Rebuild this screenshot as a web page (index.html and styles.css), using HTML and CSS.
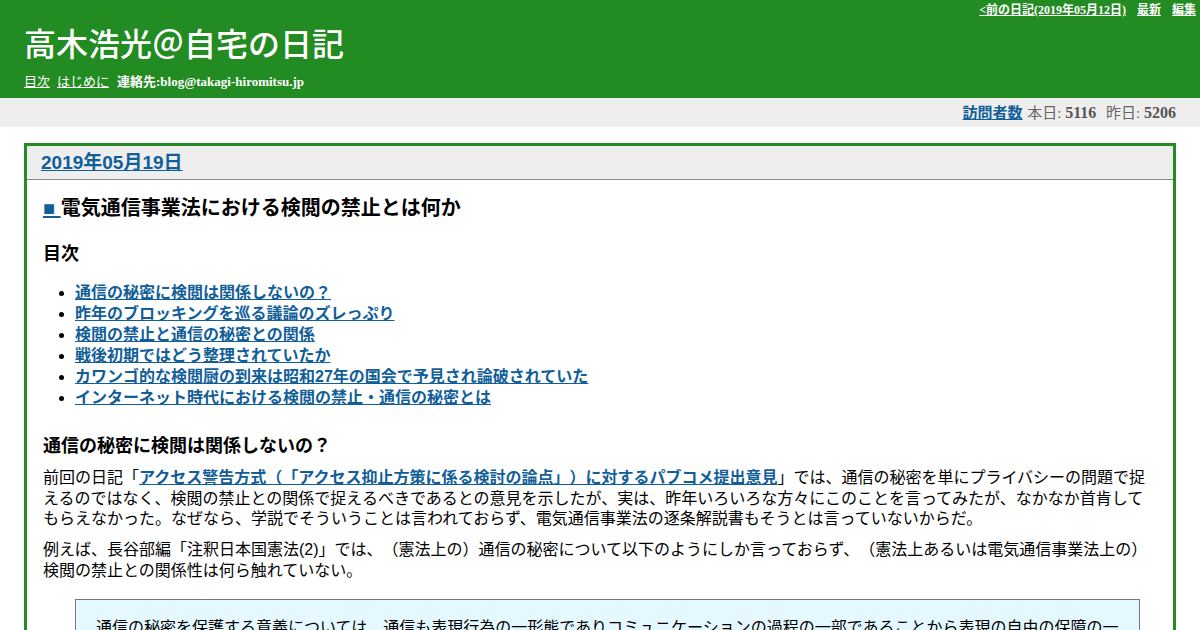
FILE: index.html
```html
<!DOCTYPE html>
<html lang="ja">
<head>
<meta charset="utf-8">
<title>高木浩光＠自宅の日記</title>
<link rel="stylesheet" href="styles.css">
</head>
<body>
<header class="site-header">
  <nav class="topnav">
    <a href="#">&lt;前の日記(2019年05月12日)</a>
    <a href="#">最新</a>
    <a href="#">編集</a>
  </nav>
  <h1 class="site-title">高木浩光＠自宅の日記</h1>
  <div class="subnav">
    <a href="#">目次</a>
    <a href="#">はじめに</a>
    <span class="contact">連絡先:blog@takagi-hiromitsu.jp</span>
  </div>
</header>
<div class="counter">
  <a href="#" class="counter-link">訪問者数</a>
  <span class="label">本日:</span> <b>5116</b>
  <span class="label label-gap">昨日:</span> <b>5206</b>
</div>
<main class="day">
  <div class="day-head"><a href="#">2019年05月19日</a></div>
  <div class="day-body">
    <h2 class="entry-title"><a href="#">■ </a>電気通信事業法における検閲の禁止とは何か</h2>
    <h3 class="sub">目次</h3>
    <ul class="toc">
      <li><a href="#">通信の秘密に検閲は関係しないの？</a></li>
      <li><a href="#">昨年のブロッキングを巡る議論のズレっぷり</a></li>
      <li><a href="#">検閲の禁止と通信の秘密との関係</a></li>
      <li><a href="#">戦後初期ではどう整理されていたか</a></li>
      <li><a href="#">カワンゴ的な検閲厨の到来は昭和27年の国会で予見され論破されていた</a></li>
      <li><a href="#">インターネット時代における検閲の禁止・通信の秘密とは</a></li>
    </ul>
    <h3 class="sub sec">通信の秘密に検閲は関係しないの？</h3>
    <p>前回の日記「<a href="#">アクセス警告方式（「アクセス抑止方策に係る検討の論点」）に対するパブコメ提出意見</a>」では、通信の秘密を単にプライバシーの問題で捉えるのではなく、検閲の禁止との関係で捉えるべきであるとの意見を示したが、実は、昨年いろいろな方々にこのことを言ってみたが、なかなか首肯してもらえなかった。なぜなら、学説でそういうことは言われておらず、電気通信事業法の逐条解説書もそうとは言っていないからだ。</p>
    <p>例えば、長谷部編「注釈日本国憲法(2)」では、（憲法上の）通信の秘密について以下のようにしか言っておらず、（憲法上あるいは電気通信事業法上の）検閲の禁止との関係性は何ら触れていない。</p>
    <blockquote class="quote">
      <p>通信の秘密を保護する意義については、通信も表現行為の一形態でありコミュニケーションの過程の一部であることから表現の自由の保障の一環として、また通信の内容等を知られないことによる私生活の保護として理解されている。</p>
    </blockquote>
  </div>
</main>
</body>
</html>
```

FILE: styles.css
```css
html, body {
  margin: 0;
  padding: 0;
  background: #ffffff;
}
body {
  font-family: "Liberation Sans", "Noto Sans CJK JP", sans-serif;
  color: #000;
  text-spacing-trim: space-all;
}
a {
  color: #115e99;
}

.site-header {
  background: #228b22;
  color: #ffffff;
  padding: 0 24px 7px;
}
.site-header a {
  color: #ffffff;
}
.topnav {
  text-align: right;
  margin-right: -20px;
  padding-top: 2px;
  font-family: "Liberation Serif", "Noto Sans CJK JP", serif;
  font-size: 12px;
  line-height: 16px;
  font-weight: bold;
  word-spacing: 8px;
}
.topnav a {
  word-spacing: 0;
}
.site-title {
  margin: 7px 0 8px;
  font-family: "Liberation Sans", "Noto Sans CJK JP", sans-serif;
  font-size: 32px;
  line-height: 40px;
  font-weight: 500;
}
.subnav {
  font-family: "Liberation Serif", "Noto Sans CJK JP", serif;
  font-size: 13px;
  line-height: 18px;
  display: flex;
  gap: 7px;
}
.subnav a {
  font-weight: normal;
}
.contact {
  font-weight: bold;
  margin-left: 1px;
}

.counter {
  background: #eeeeee;
  height: 29px;
  line-height: 29px;
  text-align: right;
  padding-right: 24px;
  font-family: "Liberation Serif", "Noto Sans CJK JP", serif;
  font-size: 15px;
  color: #666666;
}
.counter-link {
  font-weight: bold;
  color: #115e99;
  margin-right: 1px;
}
.counter b {
  color: #555555;
  font-size: 16px;
}
.label-gap {
  margin-left: 6px;
}

.day {
  display: block;
  margin: 16px 24px 0;
  border: 3px solid #228b22;
}
.day-head {
  background: #eeeeee;
  border-bottom: 1px solid #888888;
  height: 33px;
  line-height: 34px;
  padding-left: 14px;
  font-size: 19px;
  font-weight: bold;
}
.day-body {
  padding: 15px 16px 0;
  font-size: 16px;
  line-height: 20.8px;
}
.entry-title {
  margin: 0;
  font-size: 20px;
  line-height: 26px;
  font-weight: bold;
}
.sub {
  margin: 22px 0 16px;
  font-size: 18px;
  line-height: 23.4px;
  font-weight: bold;
}
.sub.sec {
  margin: 27px 0 9px;
}
.toc {
  margin: 0;
  padding-left: 32px;
  line-height: 21px;
}
.toc a {
  font-weight: bold;
}
.day-body p {
  margin: 0 0 10px;
}
.day-body p a {
  font-weight: bold;
}
.quote {
  margin: 17px 17px 0 32px;
  background: #e6f8ff;
  border: 1px solid #777777;
  padding: 18px 20px;
}
.quote p {
  margin: 0;
}
```
